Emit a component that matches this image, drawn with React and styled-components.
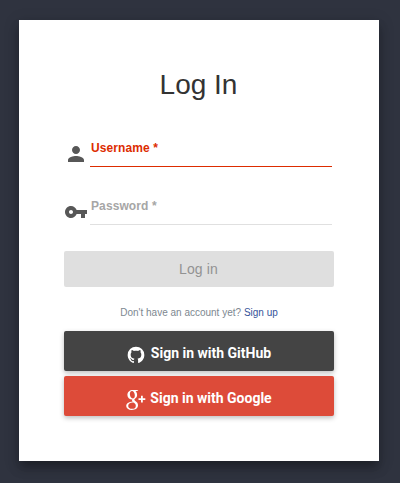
import React from "react";
import styled, { createGlobalStyle } from "styled-components";

const GlobalStyle = createGlobalStyle`
  * { box-sizing: border-box; }
  body {
    margin: 0;
    background: #2f333f;
    font-family: "Liberation Sans", Arial, sans-serif;
    overflow: hidden;
  }
`;

const Page = styled.main`
  min-height: 483px;
  padding: 20px 21px 22px 19px;
`;

const Card = styled.form`
  display: flex;
  flex-direction: column;
  width: 360px;
  height: 441px;
  padding: 49px 45px 45px;
  background: #fff;
  box-shadow: 0 7px 8px -4px rgba(0, 0, 0, 0.2),
    0 8px 10px 1px rgba(0, 0, 0, 0.14), 0 3px 14px 2px rgba(0, 0, 0, 0.12);
`;

const Title = styled.h1`
  margin: 0 0 40px;
  height: 32px;
  padding-right: 1px;
  color: #333;
  font-size: 28px;
  line-height: 32px;
  font-weight: 400;
  text-align: center;
`;

const Field = styled.label`
  display: flex;
  align-items: flex-start;
  height: 26px;
  margin-bottom: 32px;
  gap: 2px;
`;

const FieldIcon = styled.svg`
  width: 24px;
  height: 24px;
  margin-top: 1px;
  fill: #575757;
`;

const Line = styled.span`
  width: 242px;
  height: 26px;
  padding-left: 1px;
  border-bottom: 1px solid ${(p) => (p.$active ? "#dd2c00" : "#e0e0e0")};
  color: ${(p) => (p.$active ? "#dd2c00" : "#a6a6a6")};
  font-size: 12px;
  line-height: 14px;
  font-weight: 700;
  letter-spacing: 0.1px;
`;

const LoginButton = styled.button`
  height: 36px;
  flex: none;
  margin: -6px 0 0;
  padding: 0 1px 0 0;
  border: 0;
  border-radius: 2px;
  background: #dfdfdf;
  color: #929292;
  font: 400 14px/36px "Liberation Sans", Arial, sans-serif;
  letter-spacing: 0.14px;
`;

const Signup = styled.p`
  height: 12px;
  margin: 20px 0 12px;
  color: #7d8790;
  font-size: 10px;
  line-height: 12px;
  text-align: center;
`;

const SignupLink = styled.a`
  color: #35539a;
`;

const SocialButton = styled.button`
  display: flex;
  align-items: center;
  justify-content: center;
  flex: none;
  height: 40px;
  margin: 0 0 5px;
  padding: 3px 0 0;
  border: 0;
  border-radius: 2px;
  background: ${(p) => p.$color};
  color: #fff;
  box-shadow: 0 2px 5px rgba(0, 0, 0, 0.26);
  font: 700 14px/20px Roboto, sans-serif;
`;

const GithubIcon = styled.svg`
  width: 20px;
  height: 20px;
  margin: 4px 5px 0 -1px;
  fill: #fff;
`;

const GoogleIcon = styled.svg`
  width: 20px;
  height: 22px;
  margin: 4px 4px 0 0;
  fill: #fff;
  fill-rule: evenodd;
`;

const Person =
  "M12 12c2.21 0 4-1.79 4-4s-1.79-4-4-4-4 1.79-4 4 1.79 4 4 4zm0 2c-2.67 0-8 1.34-8 4v2h16v-2c0-2.66-5.33-4-8-4z";
const Key =
  "M12.65 10C11.83 7.67 9.61 6 7 6c-3.31 0-6 2.69-6 6s2.69 6 6 6c2.61 0 4.83-1.67 5.65-4H17v4h4v-4h2v-4H12.65zM7 14c-1.1 0-2-.9-2-2s.9-2 2-2 2 .9 2 2-.9 2-2 2z";
const Github =
  "M12 2A10 10 0 0 0 2 12c0 4.42 2.87 8.17 6.84 9.5.5.08.66-.23.66-.5v-1.69c-2.77.6-3.36-1.34-3.36-1.34-.46-1.16-1.11-1.47-1.11-1.47-.91-.62.07-.6.07-.6 1 .07 1.53 1.03 1.53 1.03.87 1.52 2.34 1.07 2.91.83.09-.65.35-1.09.63-1.34-2.22-.25-4.55-1.11-4.55-4.92 0-1.11.38-2 1.03-2.71-.1-.25-.45-1.29.1-2.64 0 0 .84-.27 2.75 1.02.79-.22 1.65-.33 2.5-.33s1.71.11 2.5.33c1.91-1.29 2.75-1.02 2.75-1.02.55 1.35.2 2.39.1 2.64.65.71 1.03 1.6 1.03 2.71 0 3.82-2.34 4.66-4.57 4.91.36.31.69.92.69 1.85V21c0 .27.16.59.67.5C19.14 20.16 22 16.42 22 12A10 10 0 0 0 12 2z";
const GoogleBody =
  "M12.4 1H7C3.7 1 1.4 3.100 1.400 5.900c0 2.700 2 4.500 4.900 4.500-.5 1-.3 1.700.4 2.400C2.700 12.900.2 14.600.2 17.100c0 2.400 2.200 3.900 5.500 3.900 3.800 0 6.300-1.900 6.300-4.700 0-1.900-.9-3-2.700-4.200-1.300-.9-1.300-1.500-.1-2.500 1.400-1.100 1.900-2.200 1.900-3.700 0-1.600-.6-2.900-1.600-3.800h1.700z";
const GoogleUpperCounter =
  "M6 1.900c1.500 0 2.600 1.700 2.800 4 .2 2.200-.7 3.600-2.100 3.600-1.500 0-2.600-1.700-2.800-3.900C3.700 3.400 4.500 1.900 6 1.900z";
const GoogleLowerCounter =
  "M7.500 13.600c1.700 1.100 2.300 1.900 2.300 3.300 0 1.900-1.300 2.900-3.700 2.900-2.400 0-3.900-1.100-3.900-2.900 0-1.900 1.800-3.300 4.300-3.300z";

export default function App() {
  return (
    <>
      <GlobalStyle />
      <Page>
        <Card>
          <Title>Log In</Title>
          <Field>
            <FieldIcon viewBox="0 0 24 24"><path d={Person} /></FieldIcon>
            <Line $active>Username *</Line>
          </Field>
          <Field>
            <FieldIcon viewBox="0 0 24 24"><path d={Key} /></FieldIcon>
            <Line>Password *</Line>
          </Field>
          <LoginButton type="button">Log in</LoginButton>
          <Signup>
            Don't have an account yet? <SignupLink>Sign up</SignupLink>
          </Signup>
          <SocialButton type="button" $color="#444">
            <GithubIcon viewBox="0 0 24 24"><path d={Github} /></GithubIcon>
            Sign in with GitHub
          </SocialButton>
          <SocialButton type="button" $color="#dd4b39">
            <GoogleIcon viewBox="0 0 20 22">
              <path d={GoogleBody + GoogleUpperCounter + GoogleLowerCounter} />
              <path d="M15 6.800h1.800v2.500h2.500v1.700h-2.500v2.500H15V11h-2.500V9.300H15z" />
            </GoogleIcon>
            Sign in with Google
          </SocialButton>
        </Card>
      </Page>
    </>
  );
}
